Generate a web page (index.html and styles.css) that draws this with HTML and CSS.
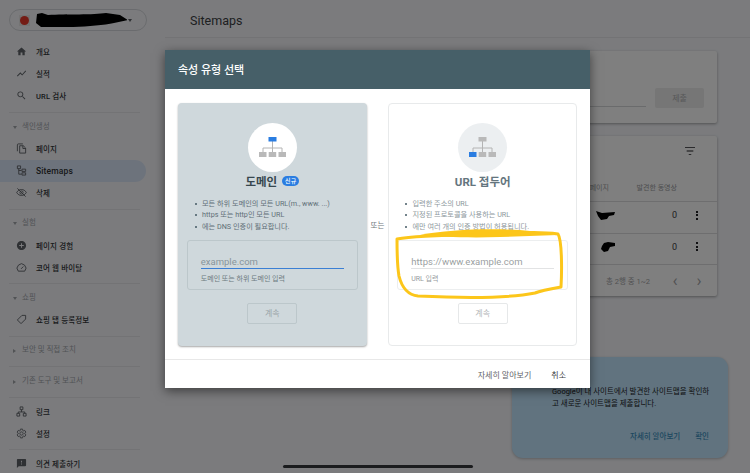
FILE: index.html
```html
<!DOCTYPE html>
<html lang="ko">
<head>
    <meta charset="UTF-8">
    <title>Sitemaps</title>
    <link rel="stylesheet" href="styles.css">
</head>
<body>
<div class="app">
    <!-- 왼쪽 메뉴 -->
    <nav class="sidebar">
        <div class="property">
            <span class="favicon"><i></i></span>
            <svg class="blackout" viewBox="0 0 91 14"><path d="M1 1 6 0 12 2C30 1 58 2 70 0L84 2 92 7 78 10C60 14 20 15 5 14L0 10Z"/></svg>
            <span class="caret"></span>
        </div>
        <a class="item"><svg viewBox="0 0 24 24"><path d="M10 20v-6h4v6h5v-8h3L12 3 2 12h3v8z"/></svg>개요</a>
        <a class="item"><svg viewBox="0 0 24 24"><path d="M3.5 18.49l6-6.01 4 4L22 6.92l-1.41-1.41-7.09 7.97-4-4L2 16.99z"/></svg>실적</a>
        <a class="item"><svg viewBox="0 0 24 24"><path d="M15.5 14h-.79l-.28-.27C15.41 12.59 16 11.11 16 9.5 16 5.91 13.09 3 9.5 3S3 5.91 3 9.5 5.91 16 9.5 16c1.61 0 3.09-.59 4.23-1.57l.27.28v.79l5 4.99L20.49 19l-4.99-5zm-6 0C7.01 14 5 11.99 5 9.5S7.01 5 9.5 5 14 7.01 14 9.5 11.99 14 9.5 14z"/></svg>URL 검사</a>
        <hr class="rule first">
        <div class="group open">색인생성</div>
        <a class="item"><svg class="line" viewBox="0 0 24 24"><path d="M3 18V4a2 2 0 0 1 2-2h10M8 6h8l5 5v11H8zM15 6v6h6"/></svg>페이지</a>
        <a class="item active"><svg class="line" viewBox="0 0 24 24"><path d="M3 2h7v6H3zM6 8v12h6M6 12h6M13 9h8v5h-8zM13 17h8v5h-8z"/></svg>Sitemaps</a>
        <a class="item"><svg class="line" viewBox="0 0 24 24"><path d="M1.5 12C4 7.5 8 5.5 12 5.5s8 2 10.500 6.500c-2.500 4.500-6.500 6.500-10.500 6.500S4 16.500 1.500 12zM8.500 12a3.500 3.500 0 1 0 7 0 3.500 3.500 0 1 0-7 0zM3 3l18 18"/></svg>삭제</a>
        <hr class="rule">
        <div class="group open">실험</div>
        <a class="item"><svg viewBox="0 0 24 24"><path d="M12 2C6.480 2 2 6.480 2 12s4.480 10 10 10 10-4.480 10-10S17.520 2 12 2zm5 11h-4v4h-2v-4H7v-2h4V7h2v4h4v2z"/></svg>페이지 경험</a>
        <a class="item"><svg class="line" viewBox="0 0 24 24"><path d="M5 20a9.500 9.500 0 1 1 14 0zM11 15l5-5"/></svg>코어 웹 바이탈</a>
        <hr class="rule">
        <div class="group open">쇼핑</div>
        <a class="item"><svg class="line" viewBox="0 0 24 24"><path d="M3 13 13 3h8v8L11 21zM17 7h.01"/></svg>쇼핑 탭 등록정보</a>
        <hr class="rule">
        <div class="group">보안 및 직접 조치</div>
        <hr class="rule">
        <div class="group">기존 도구 및 보고서</div>
        <hr class="rule">
        <a class="item"><svg class="line" viewBox="0 0 24 24"><path d="M9 2h6v6H9zM12 8v5M5 13h14v3M5 13v3M2 16h6v6H2zM16 16h6v6h-6z"/></svg>링크</a>
        <a class="item"><svg class="line" viewBox="0 0 24 24"><path d="M19.140 12.940c.04-.3.06-.61.06-.94 0-.32-.02-.64-.07-.94l2.030-1.580c.18-.14.23-.41.12-.61l-1.920-3.320c-.12-.22-.37-.29-.59-.22l-2.390.96c-.5-.38-1.030-.7-1.620-.94l-.36-2.540c-.04-.24-.24-.41-.48-.41h-3.840c-.24 0-.43.17-.47.41l-.36 2.540c-.59.24-1.130.57-1.620.94l-2.390-.96c-.22-.08-.47 0-.59.22L2.740 8.870c-.12.21-.08.47.12.61l2.030 1.580c-.05.3-.09.63-.09.94s.02.64.07.94l-2.030 1.580c-.18.14-.23.41-.12.61l1.920 3.320c.12.22.37.29.59.22l2.390-.96c.5.38 1.030.7 1.620.94l.36 2.540c.05.24.24.41.48.41h3.840c.24 0 .44-.17.47-.41l.36-2.540c.59-.24 1.130-.56 1.620-.94l2.390.96c.22.08.47 0 .59-.22l1.920-3.320c.12-.22.07-.47-.12-.61l-2.010-1.580zM12 15.600c-1.980 0-3.600-1.620-3.600-3.600s1.620-3.600 3.600-3.600 3.600 1.620 3.600 3.600-1.620 3.600-3.600 3.600z"/></svg>설정</a>
        <hr class="rule">
        <a class="item"><svg viewBox="0 0 24 24"><path d="M20 2H4c-1.100 0-1.990.9-1.990 2L2 22l4-4h14c1.100 0 2-.9 2-2V4c0-1.100-.9-2-2-2zm-7 12h-2v-2h2v2zm0-4h-2V6h2v4z"/></svg>의견 제출하기</a>
    </nav>

    <!-- 본문 -->
    <main class="main">
        <header class="topbar">Sitemaps</header>
        <section class="card addmap">
            <span class="addline"></span>
            <span class="submit">제출</span>
        </section>
        <section class="card maps">
            <div class="maps-top">
                <svg class="filter" viewBox="0 0 12 9"><path d="M0 0h12v1H0zM2 4h8v1H2zM4.500 8h3v1h-3z"/></svg>
            </div>
            <div class="row head">
                <span class="col-pages"><b>페이지</b></span>
                <span class="col-video">발견한 동영상</span>
                <span class="col-more"></span>
            </div>
            <div class="row">
                <span class="col-pages"><svg class="mark" viewBox="0 0 19 9"><path d="M0 0 6 2 19 1 18 4 13 5 11 8 5 9 2 5Z"/></svg></span>
                <span class="col-video">0</span>
                <span class="col-more"><i></i><i></i><i></i></span>
            </div>
            <div class="row">
                <span class="col-pages"><svg class="mark small" viewBox="0 0 14 10"><path d="M3 1 7 0 14 1 14 4 9 5 7 9 3 10 0 7 1 4Z"/></svg></span>
                <span class="col-video">0</span>
                <span class="col-more"><i></i><i></i><i></i></span>
            </div>
            <div class="pager">
                <span class="pager-text">총 2행 중 1~2</span>
                <span class="chev">‹</span>
                <span class="chev">›</span>
            </div>
        </section>
    </main>
</div>

<!-- 안내 카드 -->
<aside class="promo">
    <h4>Sitemaps</h4>
    <p>Google이 내 사이트에서 발견한 사이트맵을 확인하고 새로운 사이트맵을 제출합니다.</p>
    <div class="promo-btns"><span>자세히 알아보기</span><span>확인</span></div>
</aside>

<div class="scrim"></div>

<!-- 속성 유형 선택 -->
<div class="dialog">
    <div class="dialog-title">속성 유형 선택</div>
    <div class="dialog-body">
        <div class="type domain">
            <div class="circle">
                <svg viewBox="0 0 27 20"><path class="wire" d="M13.500 4v12M4 16v-5h19v5"/><rect class="on" x="9.500" width="8" height="4.500"/><rect class="off" y="15" width="7.500" height="5"/><rect class="off" x="9.700" y="15" width="7.500" height="5"/><rect class="off" x="19.500" y="15" width="7.500" height="5"/></svg>
            </div>
            <h3>도메인<span class="badge">신규</span></h3>
            <ul>
                <li>모든 하위 도메인의 모든 URL(m., www. ...)</li>
                <li>https 또는 http인 모든 URL</li>
                <li>에는 DNS 인증이 필요합니다.</li>
            </ul>
            <div class="field">
                <div class="value">example.com</div>
                <div class="hint">도메인 또는 하위 도메인 입력</div>
            </div>
            <div class="next">계속</div>
        </div>
        <div class="or">또는</div>
        <div class="type prefix">
            <div class="circle">
                <svg viewBox="0 0 27 20"><path class="wire" d="M13.500 4v12M4 16v-5h19v5"/><rect class="off" x="9.500" width="8" height="4.500"/><rect class="on" y="15" width="7.500" height="5"/><rect class="off" x="9.700" y="15" width="7.500" height="5"/><rect class="off" x="19.500" y="15" width="7.500" height="5"/></svg>
            </div>
            <h3>URL 접두어</h3>
            <ul>
                <li>입력한 주소의 URL</li>
                <li>지정된 프로토콜을 사용하는 URL</li>
                <li>에만 여러 개의 인증 방법이 허용됩니다.</li>
            </ul>
            <div class="field">
                <div class="value">https://www.example.com</div>
                <div class="hint">URL 입력</div>
            </div>
            <div class="next">계속</div>
        </div>
    </div>
    <div class="dialog-foot"><span>자세히 알아보기</span><span>취소</span></div>
</div>

<!-- 노란 펜 표시 -->
<svg class="pen" viewBox="0 0 750 473">
    <path class="pen-fill" d="M420 235C450 229 500 228 530 231L558 235 500 237C470 238 440 237 420 235Z"/>
    <path class="pen-line" d="M397 239C420 235 470 235 500 234 525 232 545 232 558 234 562 240 562 270 561 287 550 289 540 291 535 293 510 298 460 298 418 296 408 295 402 288 399 276 397 265 397 250 397 239Z"/>
</svg>

<div class="homebar"></div>
</body>
</html>
```

FILE: styles.css
```css
*{
    margin: 0;
    padding: 0;
    box-sizing: border-box;
    list-style-type: none;
}
body{
    height: 473px;
    overflow: hidden;
    background: #f6f7fb;
    font-family: Roboto, "Noto Sans CJK KR", sans-serif;
    color: #202124;
}
.app{
    display: flex;
    height: 473px;
}

/* 왼쪽 메뉴 */
.sidebar{
    width: 165px;
    flex: none;
    padding-top: 9px;
    font-size: 7.500px;
}
.property{
    display: flex;
    align-items: center;
    width: 138px;
    height: 22px;
    margin: 0 0 9px 9px;
    padding-left: 9px;
    border: 1px solid #d5d7dc;
    border-radius: 11px;
}
.favicon{
    display: flex;
    align-items: center;
    justify-content: center;
    width: 11px;
    height: 11px;
    background: #e8e8e8;
}
.favicon i{
    width: 9px;
    height: 9px;
    border-radius: 50%;
    background: #e8392b;
}
.blackout{
    width: 91px;
    height: 14px;
    margin-left: 6px;
}
.caret{
    width: 0;
    height: 0;
    margin-left: 1px;
    border: 2px solid transparent;
    border-top: 3px solid #5f6368;
    border-bottom: 0;
}
.item{
    display: flex;
    align-items: center;
    gap: 9px;
    height: 22px;
    margin-right: 19px;
    padding-left: 16px;
    font-weight: 500;
    letter-spacing: .15px;
    color: #2f3235;
    border-radius: 0 11px 11px 0;
}
.item svg{
    width: 11px;
    height: 11px;
    flex: none;
    fill: #5f6368;
}
.item svg.line{
    fill: none;
    stroke: #5f6368;
    stroke-width: 2;
}
.active{
    font-size: 8.500px;
    background: #dbe6f8;
}
.group{
    position: relative;
    height: 22px;
    line-height: 22px;
    padding-left: 22px;
    color: #a3a6ab;
}
.group::before{
    content: "";
    position: absolute;
    left: 13px;
    top: 10px;
    border: 2px solid transparent;
    border-left: 3px solid #a3a6ab;
    border-right: 0;
}
.group.open::before{
    top: 10px;
    border: 2px solid transparent;
    border-top: 3px solid #a3a6ab;
    border-bottom: 0;
}
.rule{
    height: 1px;
    margin: 5px 25px 2.5px 9px;
    border: 0;
    background: #e6e7ea;
}
.rule.first{
    margin-top: 6px;
}

/* 본문 */
.main{
    flex: 1;
    padding-right: 33px;
}
.topbar{
    height: 38px;
    margin-right: -33px;
    padding: 12px 0 0 25px;
    font-size: 12.500px;
    line-height: 17px;
    color: #3c4043;
    border-bottom: 1px solid #e6e7ea;
}
.card{
    margin-left: 8px;
    background: #fff;
    border-radius: 2px;
    box-shadow: 0 1px 3px rgba(0,0,0,.35);
}
.addmap{
    display: flex;
    align-items: flex-end;
    justify-content: flex-end;
    height: 72px;
    margin-top: 13px;
    padding: 0 13px 15px 0;
}
.addline{
    flex: 1;
    height: 1px;
    margin: 0 9px 1px 0;
    background: #d5d6d8;
}
.submit{
    width: 49px;
    height: 20px;
    line-height: 21px;
    text-align: center;
    font-size: 8px;
    color: #b0b1b3;
    background: #ececec;
    border-radius: 2px;
}
.maps{
    height: 160px;
    margin-top: 13px;
}
.maps-top{
    display: flex;
    justify-content: flex-end;
    height: 36px;
    padding: 11px 22px 0 0;
}
.filter{
    width: 10px;
    height: 8px;
    fill: #202124;
}
.row{
    display: flex;
    align-items: center;
    justify-content: flex-end;
    height: 31.500px;
    padding-bottom: 4px;
    font-size: 9px;
    color: #3c4043;
    border-bottom: 1px solid #dcdddf;
}
.head{
    height: 30px;
    padding-bottom: 0;
    color: #9a9b9e;
    font-size: 7px;
}
.col-pages{
    display: flex;
    justify-content: flex-end;
    width: 60px;
    padding-right: 2px;
}
.col-pages b{
    font-weight: 400;
    margin-right: 6px;
}
.col-video{
    width: 60px;
    text-align: right;
}
.col-more{
    display: flex;
    flex-direction: column;
    align-items: center;
    gap: 1.500px;
    width: 40px;
}
.col-more i{
    width: 2px;
    height: 2px;
    background: #202124;
}
.mark{
    width: 19px;
    height: 9px;
}
.mark.small{
    width: 14px;
    height: 10px;
}
.pager{
    display: flex;
    align-items: center;
    justify-content: flex-end;
    height: 31px;
    padding-right: 6px;
    font-size: 7.500px;
    color: #a3a4a6;
}
.pager-text{
    margin-right: 13px;
}
.chev{
    width: 24px;
    text-align: center;
    font-size: 17px;
    line-height: 17px;
}

/* 안내 카드 */
.promo{
    position: absolute;
    left: 512px;
    top: 357px;
    width: 216px;
    height: 101px;
    padding: 14px 15px 0 40px;
    background: #c2e7ff;
    border-radius: 11px;
    box-shadow: 0 1px 3px rgba(0,0,0,.25);
    font-size: 7.500px;
}
.promo h4{
    font-size: 8.500px;
    font-weight: 500;
    line-height: 13px;
}
.promo p{
    line-height: 12px;
    margin-top: 2px;
}
.promo-btns{
    display: flex;
    justify-content: flex-end;
    gap: 15px;
    margin: 20px 4px 0 0;
    font-weight: 500;
    color: #3a8fc0;
}

.scrim{
    position: absolute;
    left: 0;
    top: 0;
    width: 750px;
    height: 473px;
    background: rgba(0,0,0,.5);
}

/* 속성 유형 선택 */
.dialog{
    position: absolute;
    left: 165px;
    top: 50px;
    width: 425px;
    height: 338px;
    background: #fff;
    box-shadow: 0 3px 10px rgba(0,0,0,.5);
}
.dialog-title{
    height: 39px;
    padding-left: 13px;
    line-height: 41px;
    font-size: 11px;
    font-weight: 500;
    color: #fff;
    background: #465f68;
}
.dialog-body{
    display: flex;
    align-items: center;
    height: 270px;
    padding: 0 13px;
}
.type{
    display: flex;
    flex-direction: column;
    align-items: center;
    width: 189px;
    height: 243px;
    padding-top: 20px;
    border-radius: 4px;
}
.domain{
    background: #cfd8dc;
    box-shadow: 0 1px 2px rgba(0,0,0,.35);
}
.prefix{
    border: 1px solid #e8eaeb;
    padding-top: 19px;
}
.or{
    width: 22px;
    text-align: center;
    font-size: 7.500px;
    color: #70787c;
}
.circle{
    display: flex;
    align-items: center;
    justify-content: center;
    width: 49px;
    height: 49px;
    border-radius: 50%;
    background: #fff;
}
.prefix .circle{
    background: #eceff1;
}
.circle svg{
    width: 27px;
    height: 20px;
}
.wire{
    fill: none;
    stroke: #b4b4b4;
    stroke-width: 1;
}
.on{
    fill: #2a7de1;
}
.off{
    fill: #b9b9b9;
}
.type h3{
    display: flex;
    align-items: center;
    height: 18px;
    font-size: 11.500px;
    font-weight: 700;
    color: #37474f;
}
.prefix h3{
    color: #64757e;
}
.badge{
    width: 17px;
    height: 10px;
    margin-left: 5px;
    line-height: 10px;
    text-align: center;
    font-size: 6px;
    font-weight: 500;
    color: #fff;
    background: #2a7de1;
    border-radius: 5px;
}
.type ul{
    align-self: flex-start;
    margin: 8px 0 0 24px;
    font-size: 7.200px;
    line-height: 11.500px;
    color: #5f6f77;
}
.prefix ul{
    margin-left: 23px;
    color: #8d979c;
}
.type li{
    position: relative;
}
.type li::before{
    content: "";
    position: absolute;
    left: -7px;
    top: 5px;
    width: 2px;
    height: 2px;
    border-radius: 50%;
    background: #455a64;
}
.field{
    width: 171px;
    height: 50px;
    margin-top: 8px;
    padding: 14px 13px 0;
    border: 1px solid #bcc7cb;
    border-radius: 3px;
}
.prefix .field{
    border-color: #eceeef;
}
.value{
    height: 13px;
    line-height: 13px;
    font-size: 9.500px;
    color: #88959b;
    box-sizing: content-box;
    border-bottom: 1px solid #3b7fd4;
}
.prefix .value{
    color: #9b9fa2;
    border-bottom-color: #e2e3e4;
}
.hint{
    margin-top: 5px;
    font-size: 7px;
    line-height: 10px;
    color: #6d7a80;
}
.prefix .hint{
    color: #95999c;
}
.next{
    width: 50px;
    height: 21px;
    margin-top: 13px;
    line-height: 19px;
    text-align: center;
    font-size: 8px;
    color: #9aa5a9;
    border: 1px solid #bcc7cb;
    border-radius: 2px;
}
.prefix .next{
    color: #b4b6b8;
    border-color: #e6e8e9;
}
.dialog-foot{
    display: flex;
    align-items: center;
    justify-content: flex-end;
    gap: 20px;
    height: 29px;
    padding-right: 24px;
    font-size: 8px;
    color: #5f6368;
    border-top: 1px solid #e8e8e8;
}
.dialog-foot span:last-child{
    color: #3c4043;
}

/* 노란 펜 */
.pen{
    position: absolute;
    left: 0;
    top: 0;
    width: 750px;
    height: 473px;
    pointer-events: none;
}
.pen-line{
    fill: none;
    stroke: #fcc61a;
    stroke-width: 3;
    stroke-linejoin: round;
}
.pen-fill{
    fill: #fcc61a;
}
.homebar{
    position: absolute;
    left: 283px;
    top: 465px;
    width: 190px;
    height: 3px;
    background: #1b1c1e;
    border-radius: 2px;
}
```
